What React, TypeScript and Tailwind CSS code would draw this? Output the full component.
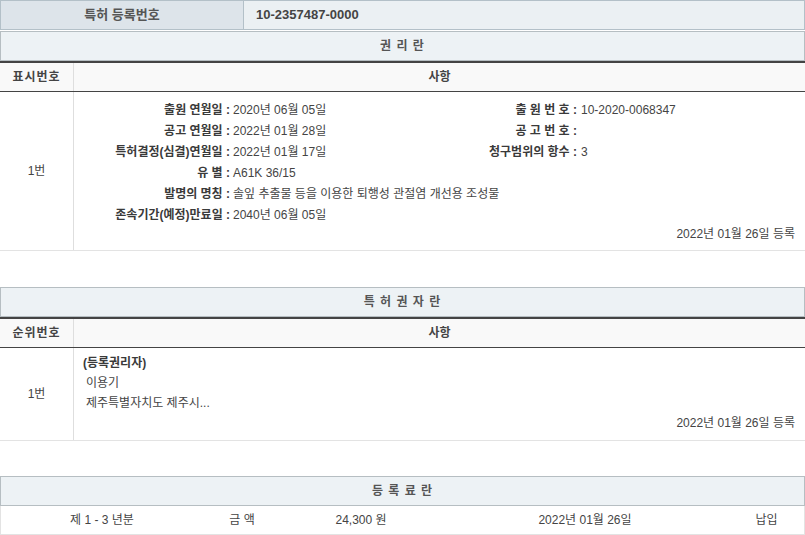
import * as React from "react";

const font = { fontFamily: '"Liberation Sans", "Noto Sans CJK KR", sans-serif' };

function SectionHead({ title }: { title: string }) {
  return (
    <div className="h-[30px] border border-[#b6bec2] bg-[#edf2f5] flex items-center justify-center text-[12px] font-bold text-[#555] tracking-[1px]">
      {title}
    </div>
  );
}

function ColHead({ first }: { first: string }) {
  return (
    <div className="border-t-2 border-[#444] border-b border-b-[#444] bg-[#f9f9f9] h-[31px] flex text-[12px] font-bold text-[#444]">
      <div className="w-[74px] border-r border-[#dedede] flex items-center justify-center tracking-[1px]">{first}</div>
      <div className="flex-1 flex items-center justify-center">사항</div>
    </div>
  );
}

const leftRows = [
  ["출원 연월일", "2020년 06월 05일", "출 원 번 호", "10-2020-0068347"],
  ["공고 연월일", "2022년 01월 28일", "공 고 번 호", ""],
  ["특허결정(심결)연월일", "2022년 01월 17일", "청구범위의 항수", "3"],
];

export default function App() {
  return (
    <div className="w-[805px] h-[535px] overflow-hidden bg-white text-[#444]" style={font}>
      {/* 등록번호 */}
      <div className="h-[30px] flex border border-[#b3c0c8] text-[13px] font-bold text-[#555]">
        <div className="w-[243px] bg-[#dde4ea] border-r border-[#b3c0c8] flex items-center justify-center">특허 등록번호</div>
        <div className="flex-1 bg-[#ebf0f3] flex items-center pl-[12px] text-[#444]">10-2357487-0000</div>
      </div>

      {/* 권리란 */}
      <div className="mt-[1px]">
        <SectionHead title="권 리 란" />
        <ColHead first="표시번호" />
        <div className="flex border-b border-[#e3e3e3] h-[159px]">
          <div className="w-[74px] border-r border-[#dedede] flex items-center justify-center text-[12px]">1번</div>
          <div className="flex-1 pt-[8px] text-[12px] leading-[21px]">
            {leftRows.map(([l1, v1, l2, v2]) => (
              <div key={l1} className="flex">
                <div className="w-[156px] text-right font-bold text-[#3a3a3a] whitespace-nowrap">{l1} :</div>
                <div className="w-[174px] pl-[3px]">{v1}</div>
                <div className="w-[173px] text-right font-bold text-[#3a3a3a]">{l2} :</div>
                <div className="pl-[4px]">{v2}</div>
              </div>
            ))}
            <div className="flex">
              <div className="w-[156px] text-right font-bold text-[#3a3a3a]">유 별 :</div>
              <div className="pl-[3px]">A61K 36/15</div>
            </div>
            <div className="flex">
              <div className="w-[156px] text-right font-bold text-[#3a3a3a]">발명의 명칭 :</div>
              <div className="pl-[3px]">솔잎 추출물 등을 이용한 퇴행성 관절염 개선용 조성물</div>
            </div>
            <div className="flex">
              <div className="w-[156px] text-right font-bold text-[#3a3a3a] whitespace-nowrap">존속기간(예정)만료일 :</div>
              <div className="pl-[3px]">2040년 06월 05일</div>
            </div>
            <div className="text-right pr-[10px] mt-[-2px]">2022년 01월 26일 등록</div>
          </div>
        </div>
      </div>

      {/* 특허권자란 */}
      <div className="mt-[36px]">
        <SectionHead title="특 허 권 자 란" />
        <ColHead first="순위번호" />
        <div className="flex border-b border-[#e3e3e3] h-[93px]">
          <div className="w-[74px] border-r border-[#dedede] flex items-center justify-center text-[12px]">1번</div>
          <div className="flex-1 pt-[5px] pl-[9px] text-[12px] leading-[20px]">
            <div className="font-bold text-[#3a3a3a]">(등록권리자)</div>
            <div className="pl-[3px]">이용기</div>
            <div className="pl-[3px]">제주특별자치도 제주시...</div>
            <div className="text-right pr-[10px]">2022년 01월 26일 등록</div>
          </div>
        </div>
      </div>

      {/* 등록료란 */}
      <div className="mt-[35px]">
        <SectionHead title="등 록 료 란" />
        <div className="h-[29px] flex border-x border-b border-[#e3e3e3] text-[12px]">
          <div className="w-[202px] flex items-center justify-center">제 1 - 3 년분</div>
          <div className="w-[78px] flex items-center justify-center">금 액</div>
          <div className="w-[160px] flex items-center justify-center">24,300 원</div>
          <div className="w-[288px] flex items-center justify-center">2022년 01월 26일</div>
          <div className="flex-1 flex items-center justify-center">납입</div>
        </div>
      </div>
    </div>
  );
}
